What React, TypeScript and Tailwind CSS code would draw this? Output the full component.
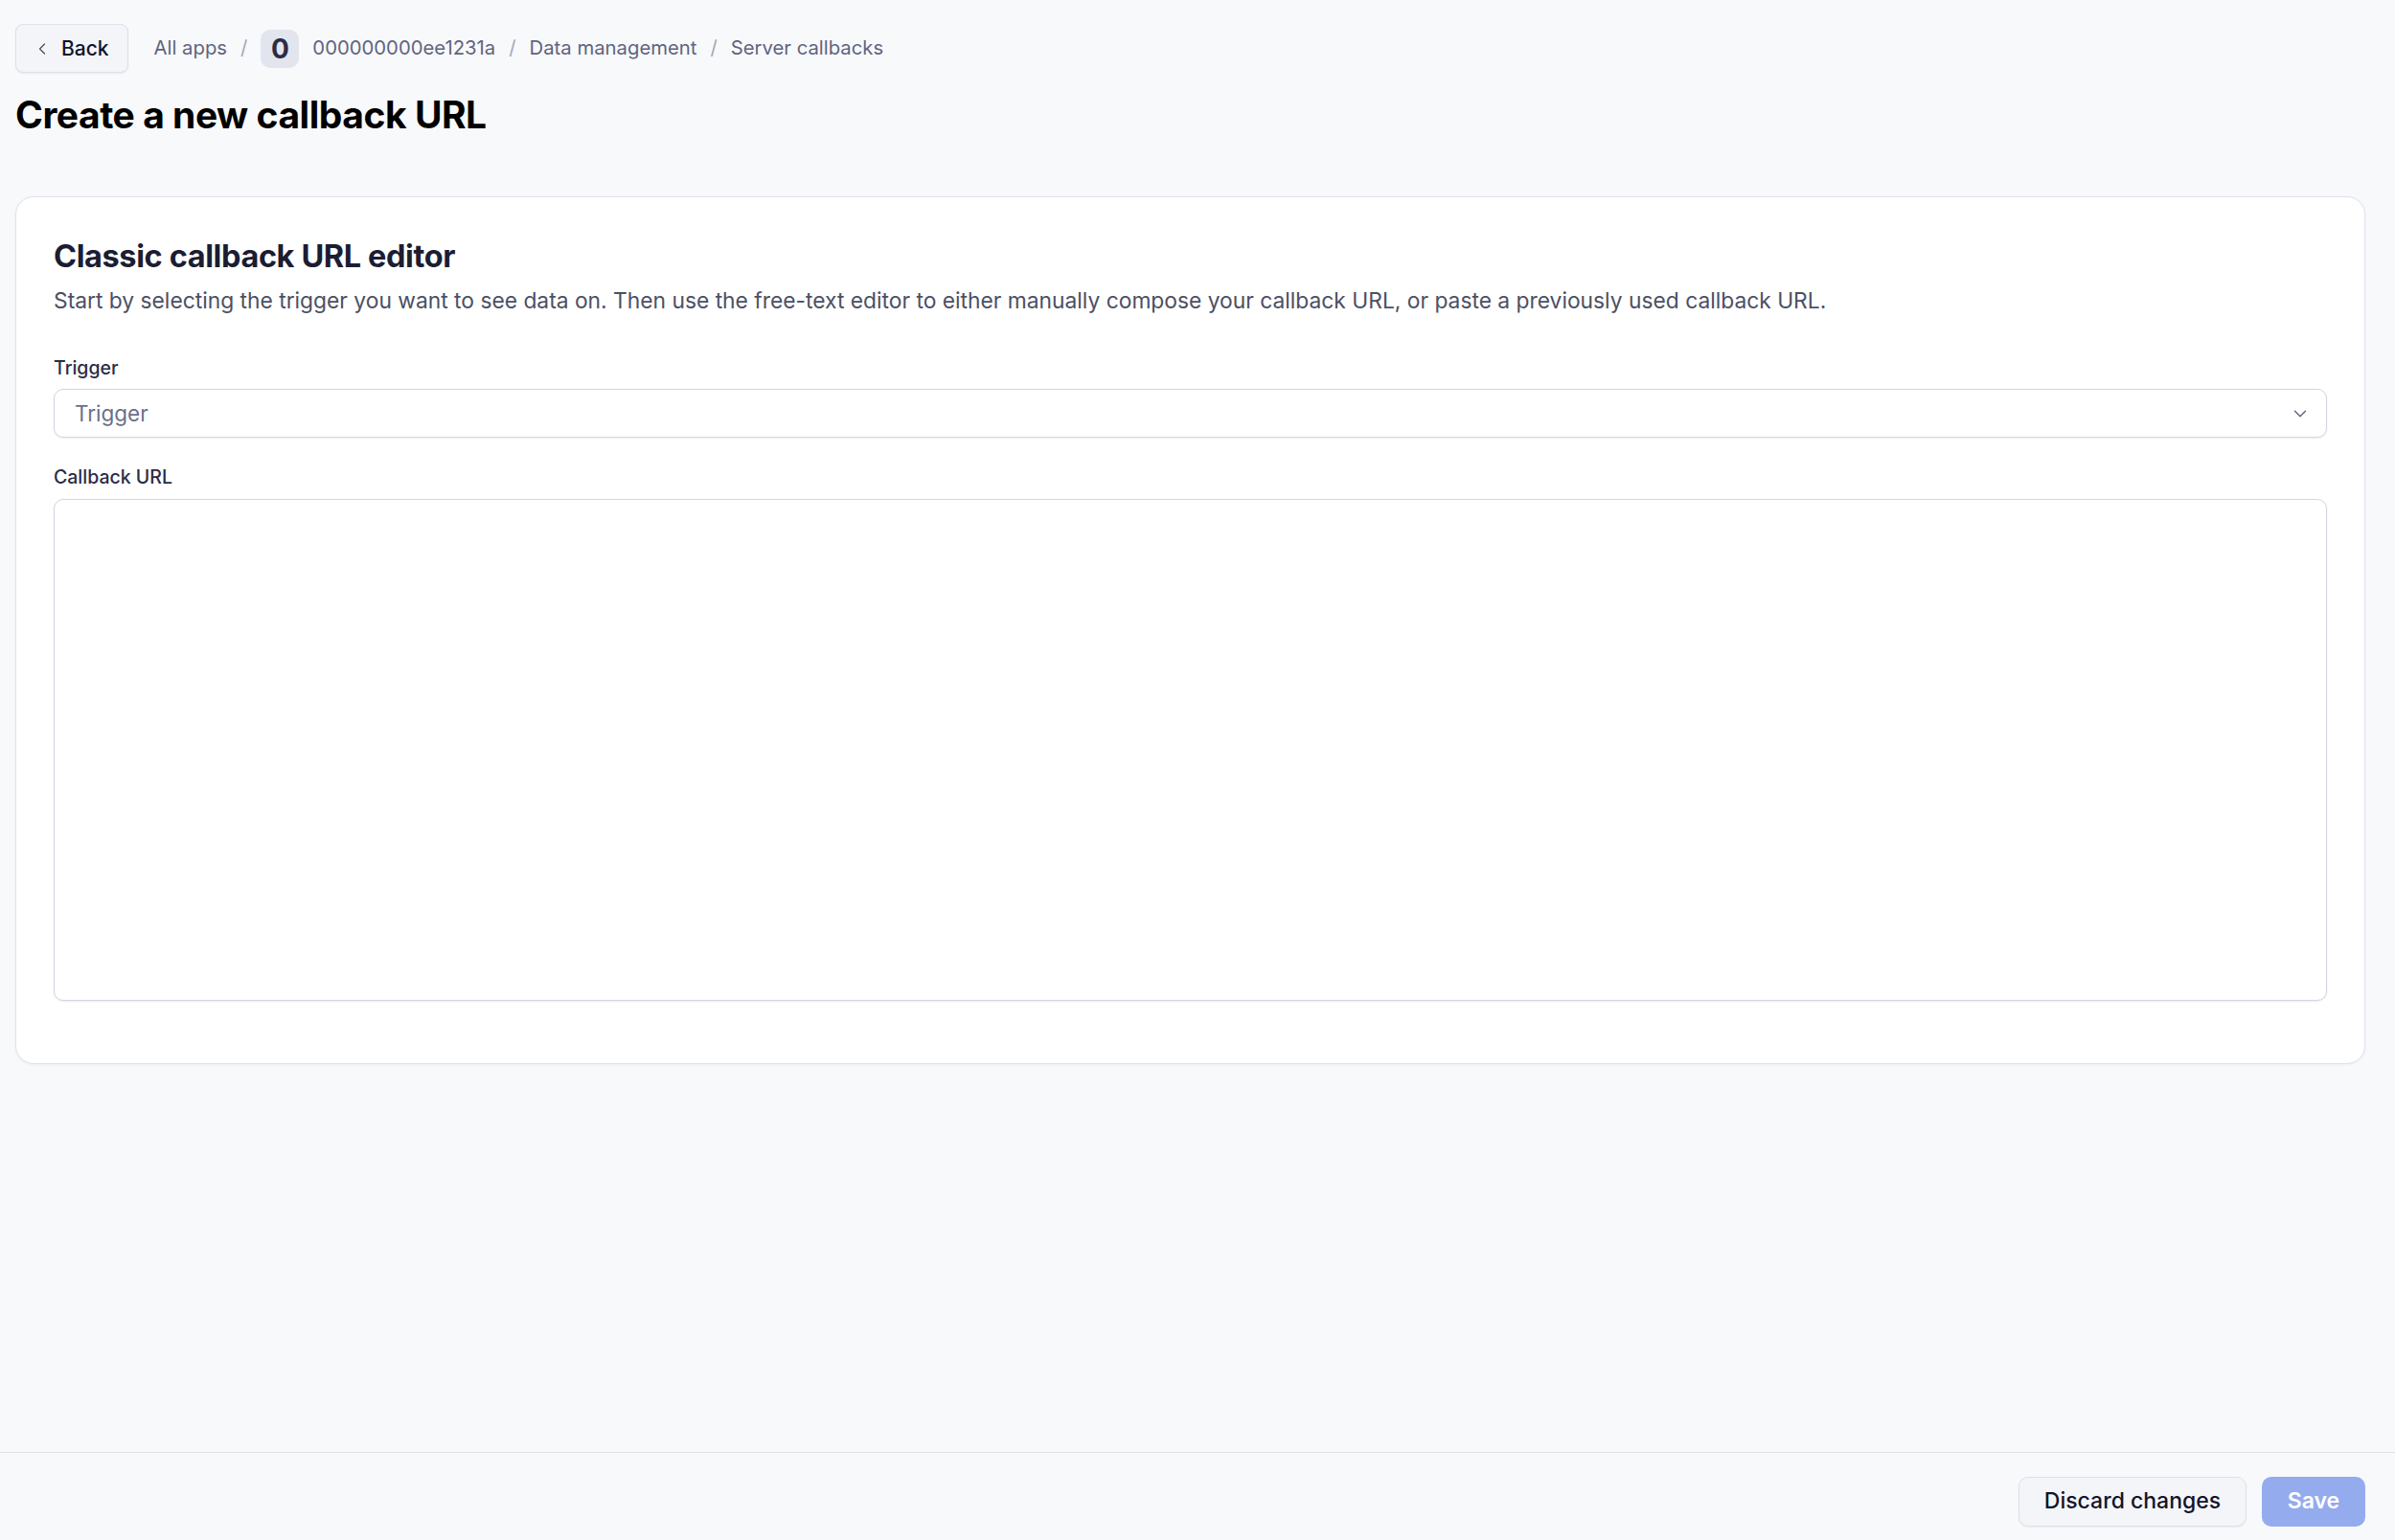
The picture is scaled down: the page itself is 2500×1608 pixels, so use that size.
import { ChevronDown, ChevronLeft } from "lucide-react";

export default function App() {
  return (
    <div className="flex h-[1608px] flex-col bg-[#f8f9fb] font-['Inter',sans-serif] text-[#12142b]">
      <div className="flex-1 pl-4 pr-[31px] pt-[25px]">
        {/* Breadcrumb row */}
        <div className="flex items-center">
          <button className="flex h-[51px] items-center gap-[10px] rounded-[8px] border border-[#dfe0e8] bg-[#f4f5f9] pl-[17px] pr-[19px] text-[21px] font-medium text-[#12142b] shadow-[0_1px_2px_rgba(0,0,0,0.06)]">
            <ChevronLeft className="h-[20px] w-[20px] text-[#4b5064]" strokeWidth={1.5} />
            Back
          </button>
          <nav className="ml-[27px] flex items-center text-[20.3px] text-[#5f6480]">
            <span>All apps</span>
            <span className="mx-[14px] text-[#a3a6b8]">/</span>
            <span className="flex h-[40px] w-[40px] items-center justify-center rounded-[10px] bg-[#e3e5ee] text-[28px] font-bold text-[#2a2d45]">
              0
            </span>
            <span className="ml-[14px]">000000000ee1231a</span>
            <span className="mx-[14px] text-[#a3a6b8]">/</span>
            <span>Data management</span>
            <span className="mx-[14px] text-[#a3a6b8]">/</span>
            <span>Server callbacks</span>
          </nav>
        </div>

        <h1 className="mt-[21px] text-[39px] font-bold leading-[45px] tracking-[-0.012em] text-black">
          Create a new callback URL
        </h1>

        {/* Card */}
        <div className="mt-[63px] rounded-[19px] border border-[#e1e2ea] bg-white px-[39px] pb-[65px] pt-[44px] shadow-[0_1px_3px_rgba(20,20,60,0.05)]">
          <h2 className="text-[32.5px] font-bold leading-[36px] tracking-[-0.012em] text-[#1b1d33]">
            Classic callback URL editor
          </h2>
          <p className="mt-[12px] text-[22.8px] leading-[32px] text-[#4b5064]">
            Start by selecting the trigger you want to see data on. Then use the free-text editor to either manually
            compose your callback URL, or paste a previously used callback URL.
          </p>

          <label className="mt-[40px] block text-[19.5px] font-medium leading-[28px] text-[#2a2d45]">Trigger</label>
          <div className="mt-[8px] flex h-[51px] items-center justify-between rounded-[10px] border border-[#d3d5e2] bg-white pl-[21px] pr-[16px] shadow-[0_1px_2px_rgba(20,20,60,0.08)]">
            <span className="text-[22.5px] text-[#6b7089]">Trigger</span>
            <ChevronDown className="h-[22px] w-[22px] text-[#5d627a]" strokeWidth={1.5} />
          </div>

          <label className="mt-[27px] block text-[19.5px] font-medium leading-[28px] text-[#2a2d45]">
            Callback URL
          </label>
          <textarea className="mt-[9px] block h-[524px] w-full resize-none rounded-[10px] border border-[#d3d5e2] bg-white shadow-[0_1px_2px_rgba(20,20,60,0.08)] outline-none" />
        </div>
      </div>

      {/* Footer */}
      <div className="flex h-[92px] items-center justify-end gap-[16px] border-t border-[#e1e2ea] pr-[31px] pt-[10px]">
        <button className="h-[52px] w-[238px] rounded-[10px] border border-[#dfe0e8] bg-[#f4f5f9] text-[23px] font-medium text-[#12142b] shadow-[0_1px_2px_rgba(0,0,0,0.06)]">
          Discard changes
        </button>
        <button className="h-[52px] w-[108px] rounded-[10px] bg-[#94abee] text-[23px] font-semibold text-white">
          Save
        </button>
      </div>
    </div>
  );
}
